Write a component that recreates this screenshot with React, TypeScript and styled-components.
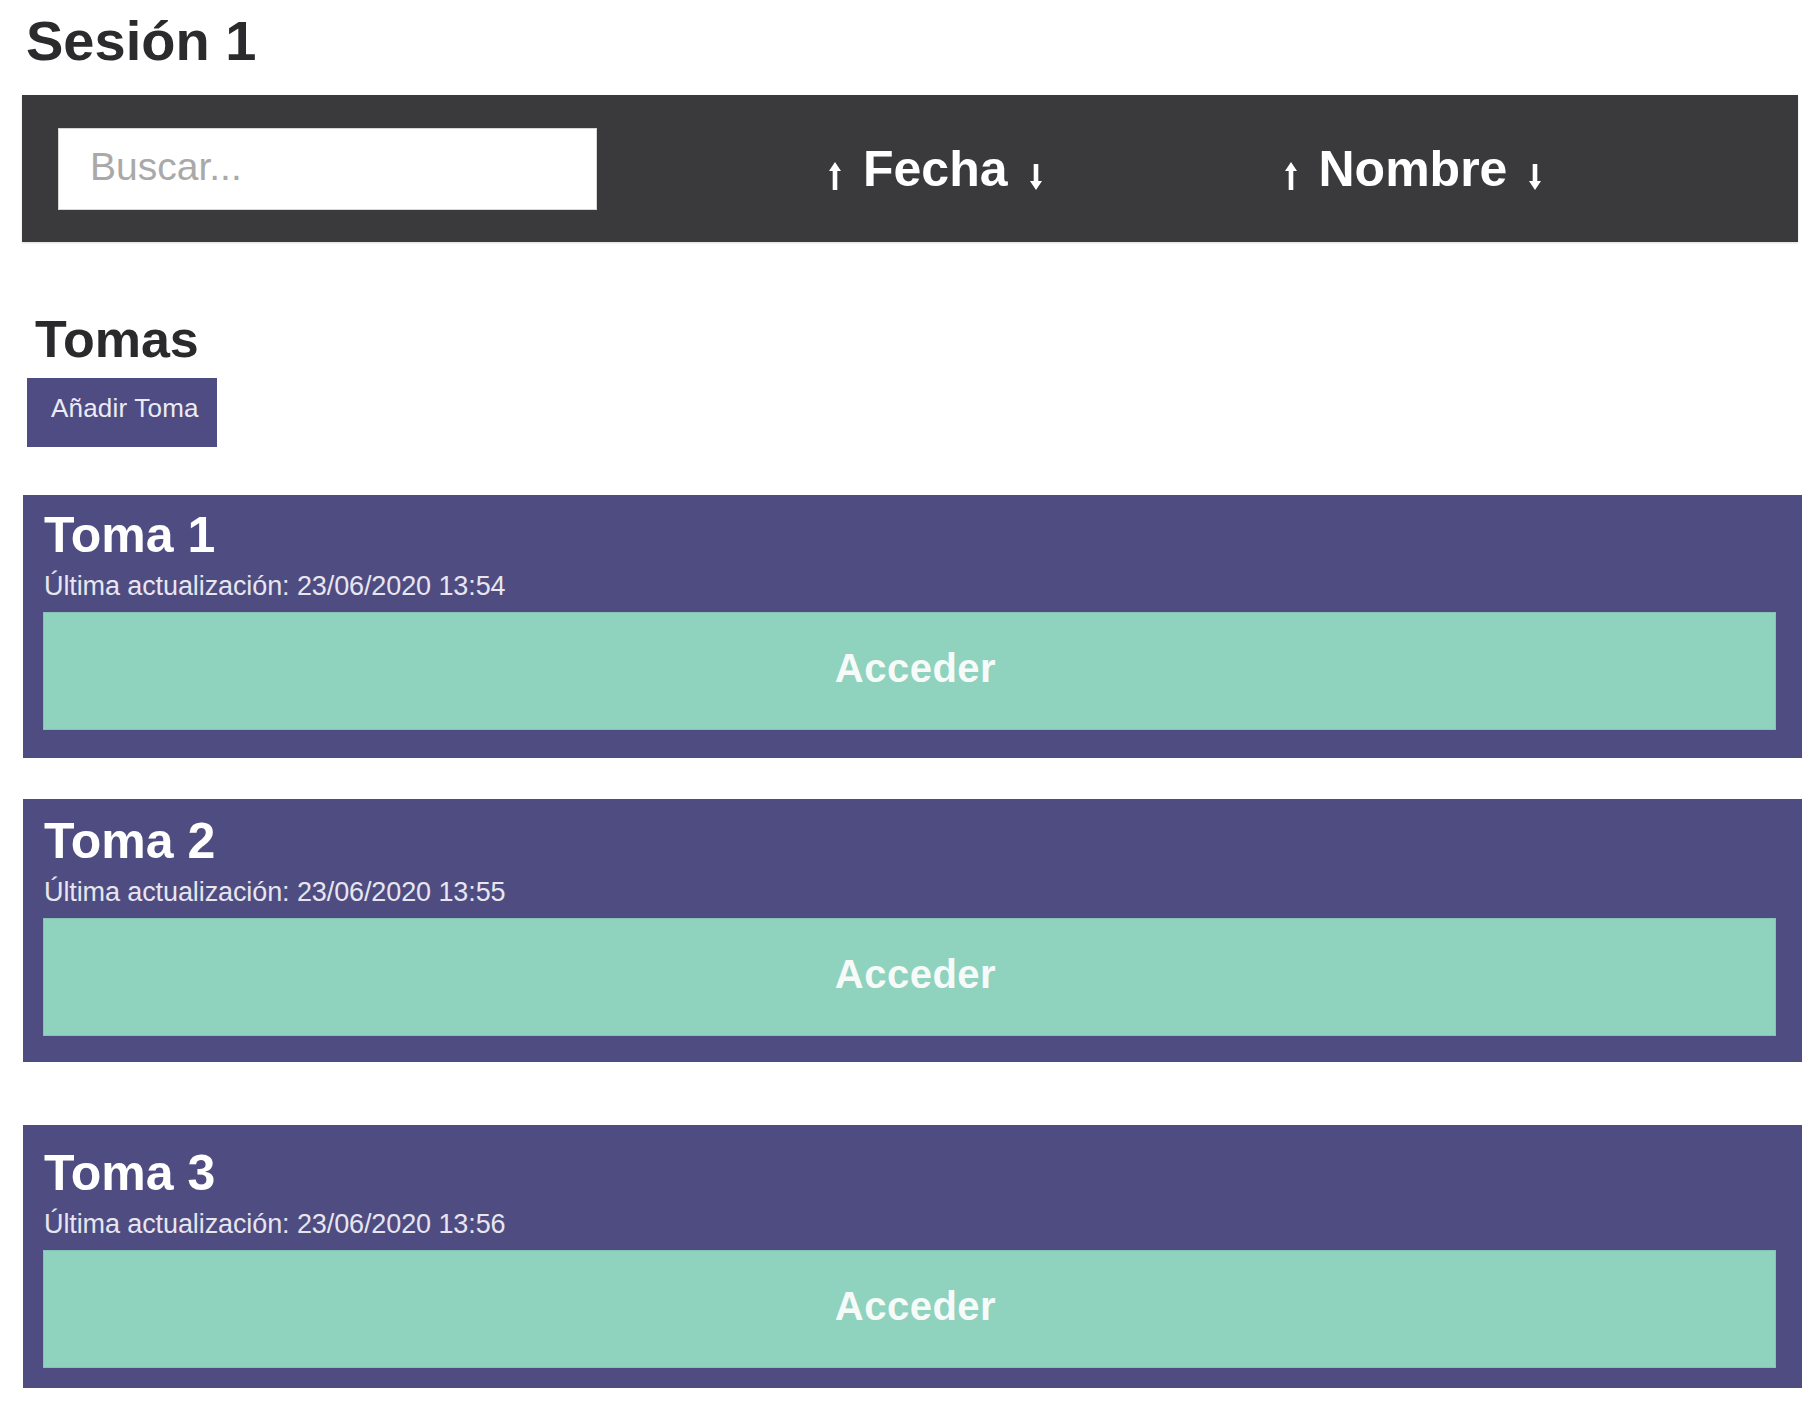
import React from "react";
import styled, { createGlobalStyle } from "styled-components";

const GlobalStyle = createGlobalStyle`
    body {
        margin: 0;
        background: #ffffff;
        font-family: "Liberation Sans", Arial, sans-serif;
    }
`;

const Page = styled.div`
    padding: 0 13px 20px 22px;
`;

const SessionTitle = styled.h1`
    margin: 13px 0 26px 4px;
    font-size: 56px;
    line-height: 1;
    font-weight: 700;
    color: #2b2b2d;
`;

const Toolbar = styled.div`
    display: flex;
    align-items: center;
    height: 147px;
    padding-left: 36px;
    background: #3a393c;
    box-shadow: 0 1px 2px rgba(0, 0, 0, 0.15);
`;

const SearchInput = styled.input`
    box-sizing: border-box;
    width: 539px;
    height: 82px;
    padding: 0 0 4px 31px;
    border: 1px solid #d6d6d6;
    background: #ffffff;
    font-family: "Liberation Sans", Arial, sans-serif;
    font-size: 39px;
    color: #333;
    outline: none;

    &::placeholder {
        color: #a9a9a9;
    }
`;

const SortButton = styled.button<{ $lead: number }>`
    display: inline-flex;
    align-items: baseline;
    gap: 22px;
    margin-left: ${(p) => p.$lead}px;
    padding: 0;
    border: 0;
    background: none;
    color: #ffffff;
    font-family: "Liberation Sans", Arial, sans-serif;
    font-size: 50px;
    font-weight: 700;
    line-height: 1;
    cursor: pointer;

    svg {
        position: relative;
        top: 4px;
    }
`;

const SectionTitle = styled.h2`
    margin: 71px 0 13px 13px;
    font-size: 52px;
    line-height: 1;
    font-weight: 700;
    color: #2a2a2c;
`;

const AddButton = styled.button`
    display: flex;
    align-items: center;
    box-sizing: border-box;
    width: 190px;
    height: 69px;
    margin-left: 5px;
    padding: 0 0 8px 24px;
    border: 0;
    background: #4f4b83;
    color: #ecebf4;
    font-family: "Liberation Sans", Arial, sans-serif;
    font-size: 26px;
    letter-spacing: 0.2px;
    cursor: pointer;
`;

const Card = styled.section<{ $space: number; $top: number }>`
    box-sizing: border-box;
    width: 1779px;
    height: 263px;
    margin: ${(p) => p.$space}px 0 0 1px;
    padding: ${(p) => p.$top}px 26px 0 20px;
    background: #4f4c82;
    display: flex;
    flex-direction: column;
`;

const CardTitle = styled.h3`
    margin: 0 0 13px 1px;
    font-size: 50px;
    line-height: 1;
    font-weight: 700;
    color: #ffffff;
`;

const Updated = styled.p`
    margin: 0 0 12px 1px;
    font-size: 27px;
    line-height: 1;
    letter-spacing: -0.1px;
    color: #e7e6ef;
`;

const EnterButton = styled.button`
    display: flex;
    align-items: center;
    justify-content: center;
    box-sizing: border-box;
    height: 118px;
    padding: 0 0 6px 12px;
    border: 1px solid #85c3b6;
    background: #8fd2be;
    color: #f6fbf9;
    font-family: "Liberation Sans", Arial, sans-serif;
    font-size: 40px;
    font-weight: 700;
    letter-spacing: 0.5px;
    cursor: pointer;
`;

const UpArrow = () => (
    <svg width="12" height="28" viewBox="0 0 12 28">
        <polygon points="6,0 12,9 8.3,9 8.3,28 3.7,28 3.7,9 0,9" fill="#ffffff" />
    </svg>
);

const DownArrow = () => (
    <svg width="12" height="26" viewBox="0 0 12 26">
        <polygon points="3.7,0 8.3,0 8.3,17 12,17 6,26 0,17 3.7,17" fill="#ffffff" />
    </svg>
);

const sorts = [
    { label: "Fecha", lead: 232 },
    { label: "Nombre", lead: 243 },
];

const tomas = [
    { id: 1, name: "Toma 1", updated: "23/06/2020 13:54", space: 48, top: 15 },
    { id: 2, name: "Toma 2", updated: "23/06/2020 13:55", space: 41, top: 17 },
    { id: 3, name: "Toma 3", updated: "23/06/2020 13:56", space: 63, top: 23 },
];

export default function App() {
    return (
        <Page>
            <GlobalStyle />
            <SessionTitle>Sesión 1</SessionTitle>
            <Toolbar>
                <SearchInput placeholder="Buscar..." />
                {sorts.map((s) => (
                    <SortButton key={s.label} $lead={s.lead}>
                        <UpArrow />
                        {s.label}
                        <DownArrow />
                    </SortButton>
                ))}
            </Toolbar>

            <SectionTitle>Tomas</SectionTitle>
            <AddButton>Añadir Toma</AddButton>

            {tomas.map((t) => (
                <Card key={t.id} $space={t.space} $top={t.top}>
                    <CardTitle>{t.name}</CardTitle>
                    <Updated>Última actualización: {t.updated}</Updated>
                    <EnterButton>Acceder</EnterButton>
                </Card>
            ))}
        </Page>
    );
}
